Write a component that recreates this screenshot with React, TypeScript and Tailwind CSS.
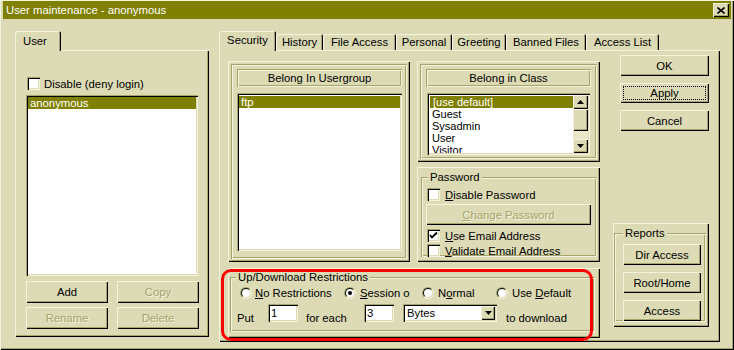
import React, { ReactNode } from 'react';

// win9x olive scheme
const raised = 'bg-[#dcdbb5] shadow-[inset_1px_1px_0_#f4f4dc,inset_-1px_-1px_0_#000,inset_-2px_-2px_0_#a4a46c]';
const sunken = 'bg-white shadow-[inset_1px_1px_0_#a4a46c,inset_2px_2px_0_#000,inset_-1px_-1px_0_#f4f4dc,inset_-2px_-2px_0_#dcdbb5]';
const etched = 'shadow-[inset_1px_1px_0_#a4a46c,inset_2px_2px_0_#f4f4dc,inset_-1px_-1px_0_#f4f4dc,inset_-2px_-2px_0_#a4a46c]';
const grayed = 'text-[#a4a46c] [text-shadow:1px_1px_0_#f4f4dc]';

type BtnProps = {
  children: ReactNode;
  className?: string;
  disabled?: boolean;
};

const Btn = ({ children, className = '', disabled }: BtnProps) => (
  <div className={`flex items-center justify-center ${raised} ${disabled ? grayed : ''} ${className}`}>{children}</div>
);

const CheckBox = ({ checked }: { checked?: boolean }) => (
  <div className={`relative h-[13px] w-[13px] shrink-0 ${sunken}`}>
    {checked && (
      <svg className="absolute left-0 top-0" width="13" height="13" viewBox="0 0 13 13">
        <path d="M3 6 L5 8.5 L10 3.5" stroke="#000" strokeWidth="1.8" fill="none" />
      </svg>
    )}
  </div>
);

const Radio = ({ checked }: { checked?: boolean }) => (
  <div className="h-[12px] w-[12px] shrink-0 rounded-full border border-t-[#a4a46c] border-l-[#a4a46c] border-r-[#f4f4dc] border-b-[#f4f4dc]">
    <div className="flex h-full w-full items-center justify-center rounded-full border border-t-black border-l-black border-r-[#dcdbb5] border-b-[#dcdbb5] bg-white">
      {checked && <div className="h-[4px] w-[4px] rounded-full bg-black" />}
    </div>
  </div>
);

const Group = ({ legend, legendLeft, children, className = '' }: { legend: string; legendLeft: string; children: ReactNode; className?: string }) => (
  <div className={`relative h-full ${etched} ${className}`}>
    <span className={`absolute -top-[6px] ${legendLeft} bg-[#dcdbb5] px-[2px] leading-[12px]`}>{legend}</span>
    {children}
  </div>
);

const Arrow = ({ down }: { down?: boolean }) => (
  <svg width="7" height="4" viewBox="0 0 7 4">
    <path d={down ? 'M0 0h7L3.5 4z' : 'M0 4h7L3.5 0z'} fill="#000" />
  </svg>
);

const tabs = [
  { label: 'Security', w: 'w-[57px]' },
  { label: 'History', w: 'w-[47px]' },
  { label: 'File Access', w: 'w-[73px]' },
  { label: 'Personal', w: 'w-[56px]' },
  { label: 'Greeting', w: 'w-[54px]' },
  { label: 'Banned Files', w: 'w-[80px]' },
  { label: 'Access List', w: 'w-[73px]' },
];

const classes = ['Guest', 'Sysadmin', 'User', 'Visitor'];

export default function App() {
  return (
    <div className="h-[350px] w-[734px] overflow-hidden bg-[#dcdbb5] font-['Liberation_Sans',Arial,sans-serif] text-[11.3px] leading-[12px] text-black">
      <div className="relative flex h-full w-full flex-col px-[3px] pb-[2px] pt-[1px] shadow-[inset_1px_1px_0_#f4f4dc,inset_-1px_-1px_0_#000,inset_-2px_-2px_0_#a4a46c]">
        {/* title bar */}
        <div className="flex h-[18px] items-center justify-between bg-[#808000] pl-[3px] pr-[2px]">
          <span className="text-white">User maintenance - anonymous</span>
          <div className={`flex h-[14px] w-[16px] items-center justify-center ${raised}`}>
            <svg width="8" height="7" viewBox="0 0 8 7">
              <path d="M0.5 0.5 L7.5 6.5 M7.5 0.5 L0.5 6.5" stroke="#000" strokeWidth="1.6" />
            </svg>
          </div>
        </div>

        <div className="flex flex-1 pl-[12px] pt-[12px]">
          {/* user column */}
          <div className="flex w-[194px] flex-col">
            <div className="relative z-10 -mb-px flex h-[20px] w-[46px] items-center rounded-t-[2px] bg-[#dcdbb5] pl-[8px] shadow-[inset_1px_1px_0_#f4f4dc,inset_-1px_0_0_#000,inset_-2px_0_0_#a4a46c]">
              User
            </div>
            <div className={`flex h-[287px] flex-col pl-[11px] pt-[27px] ${raised}`}>
              <div className="ml-px flex h-[13px] items-center gap-[4px]">
                <CheckBox />
                <span>Disable (deny login)</span>
              </div>
              <div className={`mt-[5px] h-[181px] w-[172px] p-[2px] ${sunken}`}>
                <div className="h-[12px] bg-[#808000] pl-[2px] text-white">anonymous</div>
              </div>
              <div className="mt-[5px] grid grid-cols-[82px_82px] gap-x-[9px] gap-y-[4px]">
                <Btn className="h-[22px]">Add</Btn>
                <Btn className="h-[22px]" disabled>Copy</Btn>
                <Btn className="h-[22px]" disabled>Rename</Btn>
                <Btn className="h-[22px]" disabled>Delete</Btn>
              </div>
            </div>
          </div>

          {/* tabbed column */}
          <div className="ml-[10px] flex w-[501px] flex-col">
            <div className="flex h-[19px] items-end">
              {tabs.map((t, i) =>
                i === 0 ? (
                  <div
                    key={t.label}
                    className={`relative z-10 -mb-px flex h-[20px] ${t.w} items-center justify-center rounded-t-[2px] bg-[#dcdbb5] pb-[2px] shadow-[inset_1px_1px_0_#f4f4dc,inset_-1px_0_0_#000,inset_-2px_0_0_#a4a46c]`}
                  >
                    {t.label}
                  </div>
                ) : (
                  <div
                    key={t.label}
                    className={`flex h-[16px] ${t.w} items-center justify-center rounded-t-[2px] shadow-[inset_1px_1px_0_#f4f4dc,inset_-1px_0_0_#000,inset_-2px_0_0_#a4a46c]`}
                  >
                    {t.label}
                  </div>
                )
              )}
            </div>
            <div className={`flex h-[292px] pl-[9px] pt-[5px] ${raised}`}>
              {/* left area */}
              <div className="mt-[6px] flex w-[372px] flex-col">
                <div className="flex gap-[7px]">
                  <div className={`h-[201px] w-[182px] p-[3px] ${raised}`}>
                    <div className={`h-full pl-[6px] pt-[5px] ${etched}`}>
                      <div className={`flex h-[18px] w-[165px] items-center justify-center ${etched}`}>Belong In Usergroup</div>
                      <div className={`mt-[6px] h-[158px] w-[165px] p-[2px] ${sunken}`}>
                        <div className="mt-px h-[12px] bg-[#808000] pl-[2px] text-white">ftp</div>
                      </div>
                    </div>
                  </div>
                  <div className="flex w-[183px] flex-col gap-[5px]">
                    <div className={`h-[101px] p-[3px] ${raised}`}>
                      <div className={`h-full pl-[6px] pt-[5px] ${etched}`}>
                        <div className={`flex h-[18px] w-[165px] items-center justify-center ${etched}`}>Belong in Class</div>
                        <div className={`ml-px mt-[6px] flex h-[62px] w-[163px] p-[2px] ${sunken}`}>
                          <div className="flex-1 overflow-hidden pl-px pt-px text-[11px] leading-[12px]">
                            <div className="h-[12px] bg-[#808000] text-white">{'\u00a0'}[use default]</div>
                            {classes.map((c) => (
                              <div key={c} className="h-[12px] pl-[2px]">
                                {c}
                              </div>
                            ))}
                          </div>
                          <div className="flex w-[15px] flex-col">
                            <div className={`flex h-[14px] items-center justify-center ${raised}`}>
                              <Arrow />
                            </div>
                            <div className={`h-[22px] ${raised}`} />
                            <div className="flex-1 bg-[repeating-conic-gradient(#f4f4dc_0%_25%,#dcdbb5_0%_50%)] bg-[length:2px_2px]" />
                            <div className={`flex h-[14px] items-center justify-center ${raised}`}>
                              <Arrow down />
                            </div>
                          </div>
                        </div>
                      </div>
                    </div>
                    <div className={`h-[95px] pb-[5px] pl-[4px] pr-[3px] pt-[10px] ${raised}`}>
                      <Group legend="Password" legendLeft="left-[7px]" className="pl-[5px] pt-[11px]">
                        <div className="ml-px flex h-[13px] items-center gap-[5px]">
                          <CheckBox />
                          <span>
                            <span className="underline">D</span>isable Password
                          </span>
                        </div>
                        <Btn className="mt-[3px] h-[21px] w-[165px]" disabled>
                          <span>
                            <span className="underline">C</span>hange Password
                          </span>
                        </Btn>
                        <div className="ml-px mt-[4px] flex h-[13px] items-center gap-[5px]">
                          <CheckBox checked />
                          <span>
                            <span className="underline">U</span>se Email Address
                          </span>
                        </div>
                        <div className="ml-px mt-[2px] flex h-[13px] items-center gap-[5px]">
                          <CheckBox />
                          <span>
                            <span className="underline">V</span>alidate Email Address
                          </span>
                        </div>
                      </Group>
                    </div>
                  </div>
                </div>
                <div className={`mt-[6px] h-[70px] pb-[6px] pl-[2px] pr-[5px] pt-[9px] ${raised}`}>
                  <Group legend="Up/Download Restrictions" legendLeft="left-[6px]" className="pt-[10px]">
                    <div className="flex h-[12px] items-center pl-[10px]">
                      <div className="flex w-[104px] items-center gap-[3px]">
                        <Radio />
                        <span>
                          <span className="underline">N</span>o Restrictions
                        </span>
                      </div>
                      <div className="flex w-[78px] items-center gap-[4px]">
                        <Radio checked />
                        <span>
                          <span className="underline">S</span>ession o
                        </span>
                      </div>
                      <div className="flex w-[74px] items-center gap-[4px]">
                        <Radio />
                        <span>
                          N<span className="underline">o</span>rmal
                        </span>
                      </div>
                      <div className="flex items-center gap-[4px]">
                        <Radio />
                        <span>
                          Use <span className="underline">D</span>efault
                        </span>
                      </div>
                    </div>
                    <div className="mt-[5px] flex h-[18px] items-start pl-[7px]">
                      <span className="mt-[8px] w-[31px]">Put</span>
                      <div className={`flex h-[18px] w-[30px] items-center pl-[3px] ${sunken}`}>1</div>
                      <span className="ml-[8px] mt-[8px] w-[58px]">for each</span>
                      <div className={`flex h-[18px] w-[30px] items-center pl-[3px] ${sunken}`}>3</div>
                      <div className={`ml-[9px] flex h-[18px] w-[94px] p-[2px] ${sunken}`}>
                        <span className="flex flex-1 items-center pl-[2px]">Bytes</span>
                        <div className={`flex w-[14px] items-center justify-center ${raised}`}>
                          <Arrow down />
                        </div>
                      </div>
                      <span className="ml-[9px] mt-[8px]">to download</span>
                    </div>
                  </Group>
                </div>
              </div>

              {/* right area */}
              <div className="ml-[13px] flex w-[96px] flex-col">
                <Btn className="ml-[7px] h-[21px] w-[89px] shadow-[inset_0_0_0_1px_#000,inset_2px_2px_0_#f4f4dc,inset_-2px_-2px_0_#000,inset_-3px_-3px_0_#a4a46c]">
                  OK
                </Btn>
                <Btn className="ml-[7px] mt-[7px] h-[20px] w-[89px] p-[3px]">
                  <div className="flex h-full w-full items-center justify-center border border-dotted border-black">Apply</div>
                </Btn>
                <Btn className="ml-[7px] mt-[7px] h-[21px] w-[89px]">Cancel</Btn>
                <div className={`mt-[92px] h-[104px] pb-[5px] pl-px pr-[3px] pt-[10px] ${raised}`}>
                  <Group legend="Reports" legendLeft="left-[9px]" className="flex flex-col gap-[7px] pl-[9px] pt-[11px]">
                    <Btn className="h-[21px] w-[78px]">Dir Access</Btn>
                    <Btn className="h-[21px] w-[78px]">Root/Home</Btn>
                    <Btn className="h-[21px] w-[78px]">Access</Btn>
                  </Group>
                </div>
              </div>
            </div>
          </div>
        </div>

        {/* red annotation */}
        <div className="pointer-events-none absolute left-[221px] top-[269px] h-[72px] w-[372px] rounded-[10px] border-[3px] border-[#ff0000]" />
      </div>
    </div>
  );
}
